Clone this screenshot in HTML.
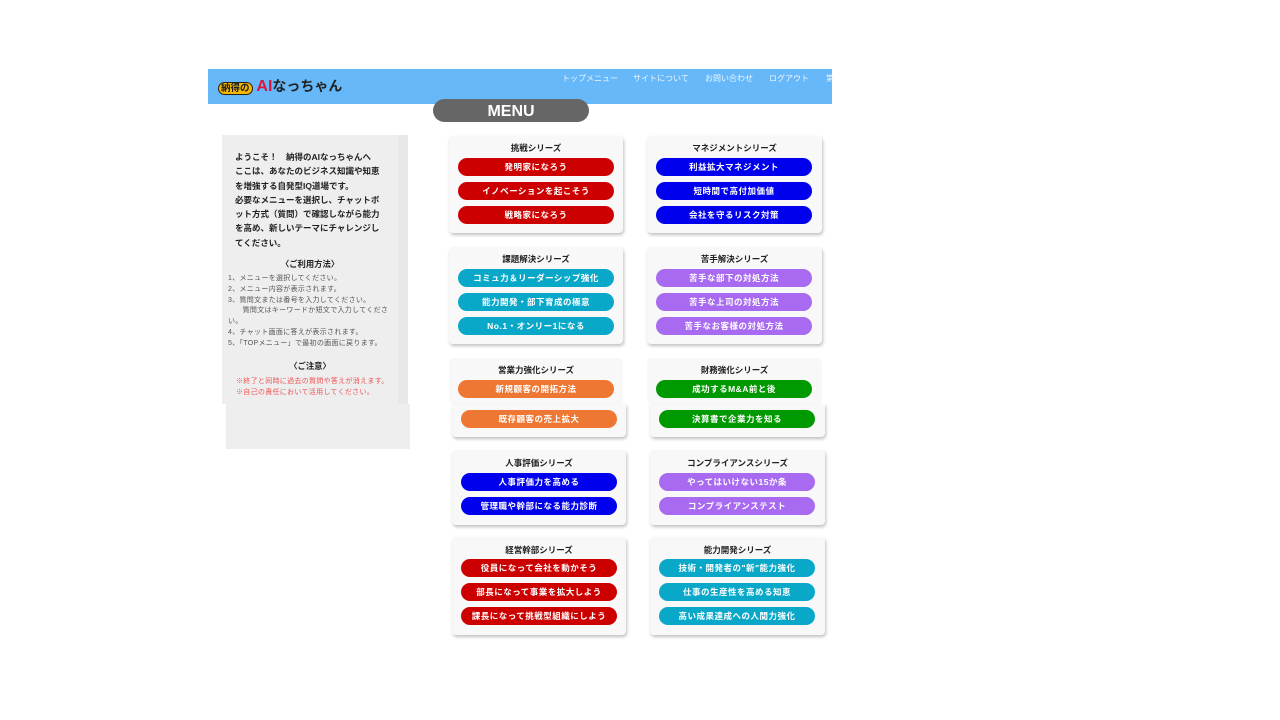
<!DOCTYPE html><html><head><meta charset="utf-8"><style>
body{margin:0;width:1280px;height:720px;background:#fff;position:relative;overflow:hidden;font-family:"Liberation Sans","Noto Sans CJK JP",sans-serif}
.a{position:absolute}
.hdr{left:208px;top:69px;width:624px;height:35px;background:#66b8f8}
.nav{top:73px;color:#eef6ff;font-size:8px}
.menu{left:433px;top:99px;width:156px;height:23px;background:#666;border-radius:12px;color:#fff;font-weight:bold;font-size:16px;text-align:center;line-height:26px}
.card{background:#f8f8f8;border-radius:4px;box-shadow:1px 2px 3px rgba(0,0,0,.25)}
.t{position:absolute;left:0;right:0;text-align:center;font-size:8.5px;font-weight:bold;color:#222}
.b{position:absolute;left:9px;width:156px;height:18px;border-radius:9px;color:#fff;font-size:8.5px;font-weight:bold;text-align:center;line-height:18px;letter-spacing:.5px}
.r{background:#cc0000}.bl{background:#0000ee}.c{background:#0aa8c8}.p{background:#a86af0}.o{background:#ee7733}.g{background:#009900}
.lp{left:222px;top:135px;width:186px;height:269px;background:#eee}
.lp2{left:226px;top:404px;width:184px;height:45px;background:#eee}
.sb{left:398px;top:135px;width:10px;height:269px;background:#e8e8e8}
</style></head><body>
<div class="a hdr"></div>
<div class="a" style="left:218px;top:76px;font-size:14px;font-weight:bold;color:#222;white-space:nowrap"><span style="background:#f5b800;border-radius:8px;padding:0 2px;font-size:9.5px;border:1px solid #222">納得の</span> <span style="color:#e0143c;font-size:16px">AI</span>なっちゃん</div>
<div class="a nav" style="left:562px">トップメニュー</div>
<div class="a nav" style="left:633px">サイトについて</div>
<div class="a nav" style="left:705px">お問い合わせ</div>
<div class="a nav" style="left:769px">ログアウト</div>
<div class="a nav" style="left:826px">第</div>
<div class="a menu">MENU</div>
<div class="a lp"></div><div class="a lp2"></div><div class="a sb"></div>
<div class="a" style="left:235px;top:150px;width:152px;font-size:8.5px;font-weight:bold;color:#222;line-height:14.3px">ようこそ！　納得のAIなっちゃんへ<br>ここは、あなたのビジネス知識や知恵を増強する自発型IQ道場です。<br>必要なメニューを選択し、チャットボット方式（質問）で確認しながら能力を高め、新しいテーマにチャレンジしてください。</div>
<div class="a" style="left:222px;top:258px;width:176px;text-align:center;font-size:8.3px;font-weight:bold;color:#222">〈ご利用方法〉</div>
<div class="a" style="left:228px;top:274px;width:162px;font-size:7px;letter-spacing:.3px;color:#555;line-height:10.8px">1、メニューを選択してください。<br>2、メニュー内容が表示されます。<br>3、質問文または番号を入力してください。<br>　　質問文はキーワードか短文で入力してください。<br>4、チャット画面に答えが表示されます。<br>5、「TOPメニュー」で最初の画面に戻ります。</div>
<div class="a" style="left:222px;top:360px;width:176px;text-align:center;font-size:8.3px;font-weight:bold;color:#222">〈ご注意〉</div>
<div class="a" style="left:236px;top:376px;width:162px;font-size:7px;letter-spacing:.3px;color:#e55;line-height:11px">※終了と同時に過去の質問や答えが消えます。<br>※自己の責任において活用してください。</div>

<div class="a card" style="left:449px;top:136px;width:174px;height:97px"><div class="t" style="top:6px">挑戦シリーズ</div><div class="b r" style="top:22px">発明家になろう</div><div class="b r" style="top:46px">イノベーションを起こそう</div><div class="b r" style="top:70px">戦略家になろう</div></div>
<div class="a card" style="left:647px;top:136px;width:175px;height:97px"><div class="t" style="top:6px">マネジメントシリーズ</div><div class="b bl" style="top:22px">利益拡大マネジメント</div><div class="b bl" style="top:46px">短時間で高付加価値</div><div class="b bl" style="top:70px">会社を守るリスク対策</div></div>
<div class="a card" style="left:449px;top:247px;width:174px;height:97px"><div class="t" style="top:6px">課題解決シリーズ</div><div class="b c" style="top:22px">コミュ力＆リーダーシップ強化</div><div class="b c" style="top:46px">能力開発・部下育成の極意</div><div class="b c" style="top:70px">No.1・オンリー1になる</div></div>
<div class="a card" style="left:647px;top:247px;width:175px;height:97px"><div class="t" style="top:6px">苦手解決シリーズ</div><div class="b p" style="top:22px">苦手な部下の対処方法</div><div class="b p" style="top:46px">苦手な上司の対処方法</div><div class="b p" style="top:70px">苦手なお客様の対処方法</div></div>
<div class="a card" style="left:449px;top:358px;width:174px;height:46px;box-shadow:none"><div class="t" style="top:6px">営業力強化シリーズ</div><div class="b o" style="top:22px">新規顧客の開拓方法</div></div>
<div class="a card" style="left:647px;top:358px;width:175px;height:46px;box-shadow:none"><div class="t" style="top:6px">財務強化シリーズ</div><div class="b g" style="top:22px">成功するM&amp;A前と後</div></div>
<div class="a card" style="left:452px;top:404px;width:174px;height:33px;border-radius:0 0 4px 4px"><div class="b o" style="top:6px">既存顧客の売上拡大</div></div>
<div class="a card" style="left:650px;top:404px;width:175px;height:33px;border-radius:0 0 4px 4px"><div class="b g" style="top:6px">決算書で企業力を知る</div></div>
<div class="a card" style="left:452px;top:450px;width:174px;height:75px"><div class="t" style="top:7px">人事評価シリーズ</div><div class="b bl" style="top:23px">人事評価力を高める</div><div class="b bl" style="top:47px">管理職や幹部になる能力診断</div></div>
<div class="a card" style="left:650px;top:450px;width:175px;height:75px"><div class="t" style="top:7px">コンプライアンスシリーズ</div><div class="b p" style="top:23px">やってはいけない15か条</div><div class="b p" style="top:47px">コンプライアンステスト</div></div>
<div class="a card" style="left:452px;top:537px;width:174px;height:98px"><div class="t" style="top:7px">経営幹部シリーズ</div><div class="b r" style="top:22px">役員になって会社を動かそう</div><div class="b r" style="top:46px">部長になって事業を拡大しよう</div><div class="b r" style="top:70px">課長になって挑戦型組織にしよう</div></div>
<div class="a card" style="left:650px;top:537px;width:175px;height:98px"><div class="t" style="top:7px">能力開発シリーズ</div><div class="b c" style="top:22px">技術・開発者の"新"能力強化</div><div class="b c" style="top:46px">仕事の生産性を高める知恵</div><div class="b c" style="top:70px">高い成果達成への人間力強化</div></div>
</body></html>
